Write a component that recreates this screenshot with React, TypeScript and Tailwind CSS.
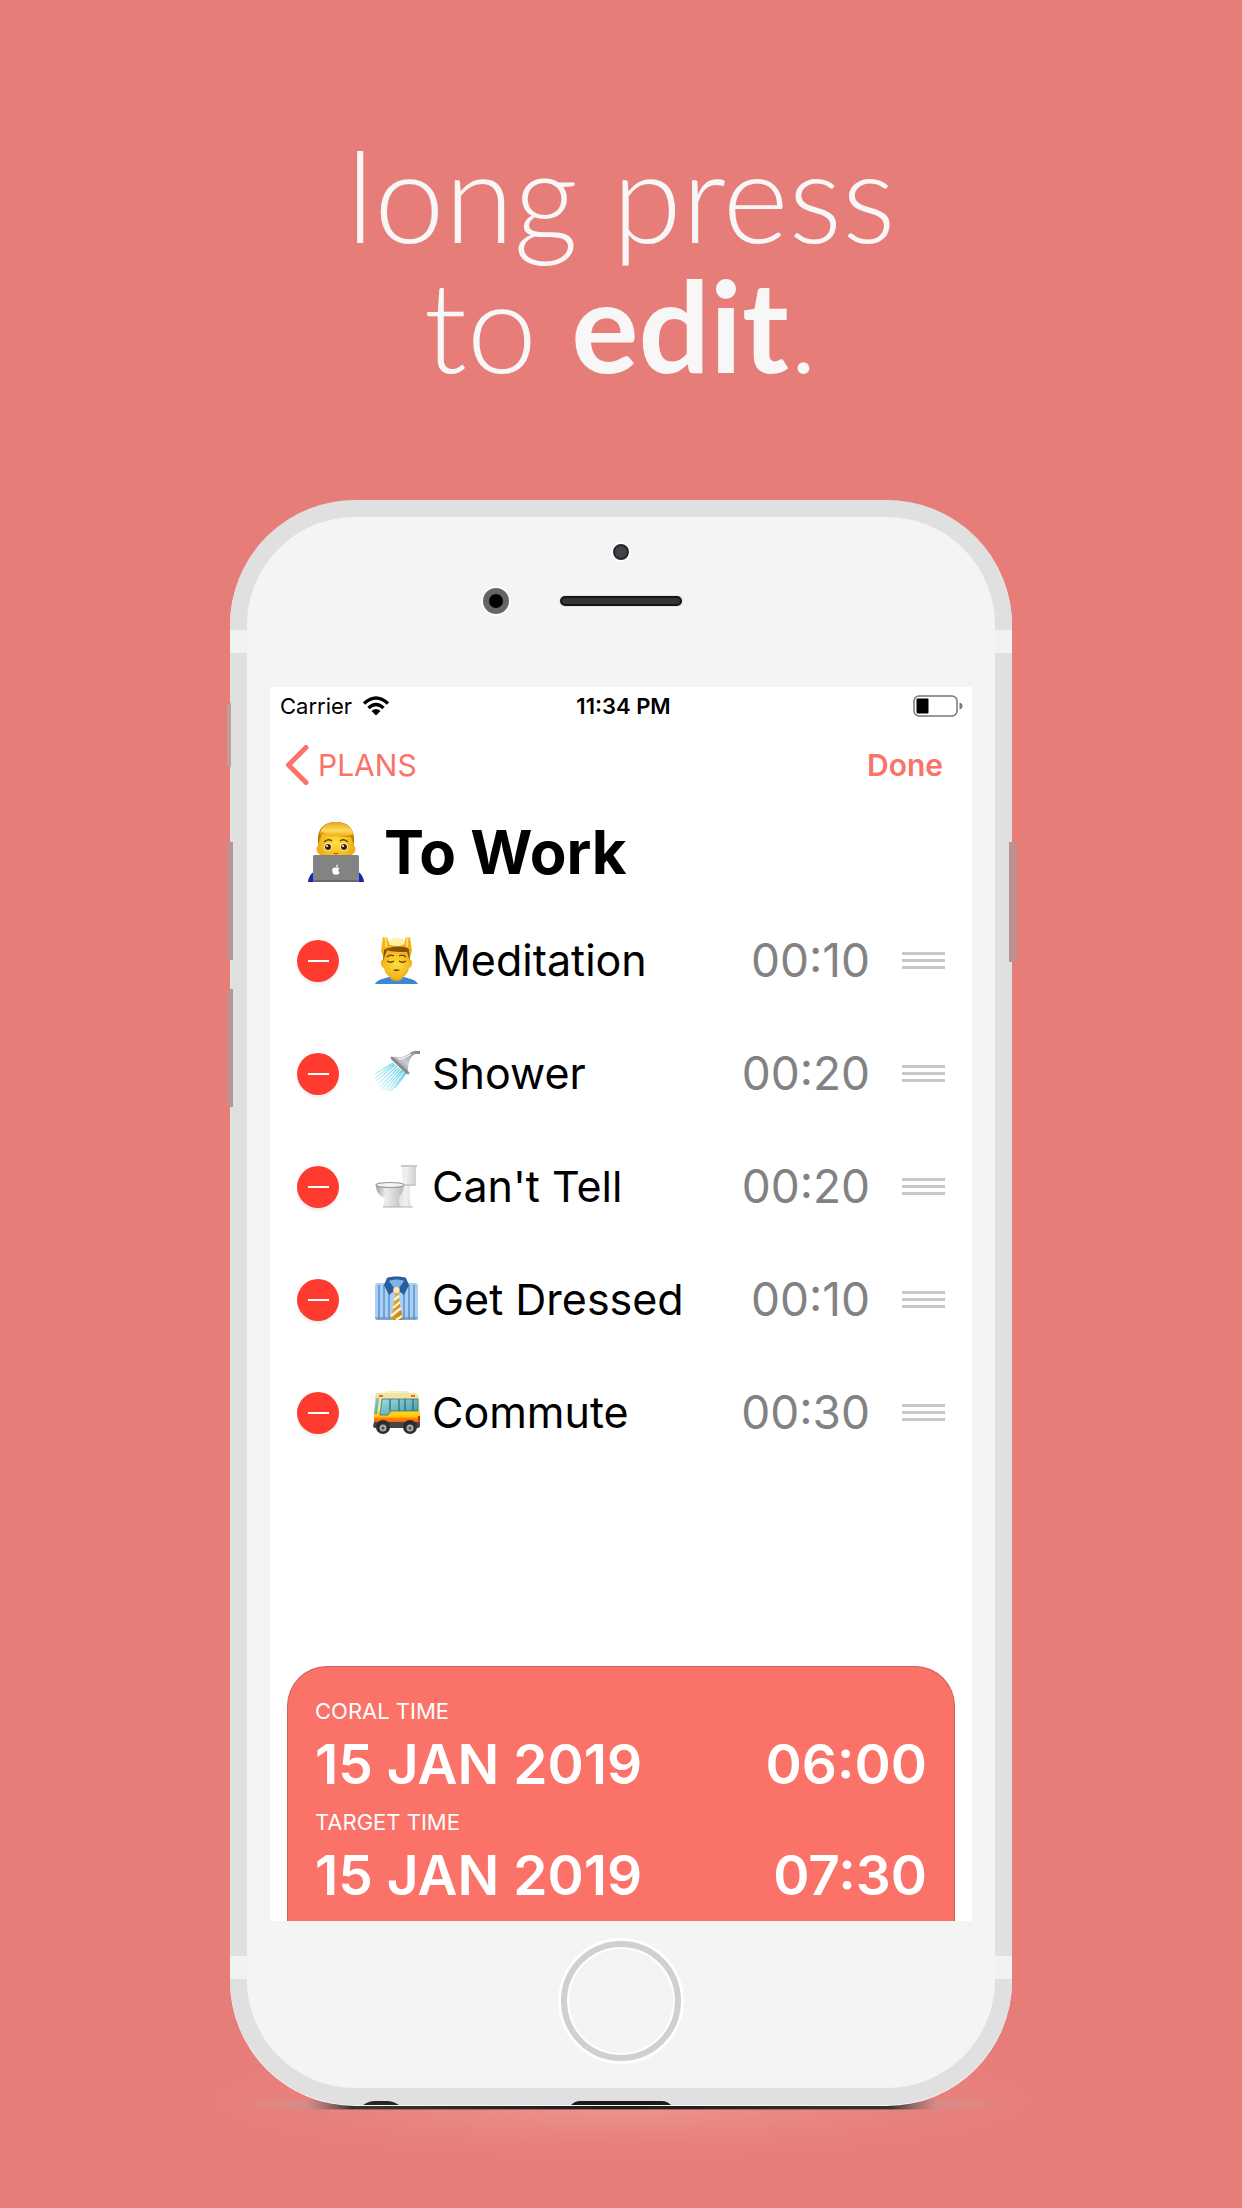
import type { ReactNode } from "react";

function Technologist() {
  return (
    <svg viewBox="0 0 56 62" className="h-[62px] w-14 shrink-0" aria-hidden="true">
      <defs>
        <radialGradient id="tFace" cx="50%" cy="60%" r="60%">
          <stop offset="0" stopColor="#ffdf3c" />
          <stop offset="1" stopColor="#eda50d" />
        </radialGradient>
        <linearGradient id="tHair" x1="0" y1="0" x2="0" y2="1">
          <stop offset="0" stopColor="#e9a417" />
          <stop offset="0.6" stopColor="#ffd95c" />
          <stop offset="1" stopColor="#f3ad12" />
        </linearGradient>
      </defs>
      <path d="M0 61c1-7 4-10 9-11h38c5 1 8 4 9 11z" fill="#1c22b8" />
      <path d="M10 20c0-12 6-19 18-19s18 7 18 19v5c2 0 2 7-1 8l-2 2H13l-2-2c-3-1-3-8-1-8z" fill="url(#tFace)" />
      <path d="M10 25V16C11 6 18 1 28 1s17 5 18 15v9l-3-9c-9-1-20 0-29-4z" fill="#c07f10" />
      <path d="M12 14C13 5 19 1 28 1s17 6 17 13c-10 2-25 2-31-3z" fill="url(#tHair)" />
      <path d="M16 21q4-4 8-1M32 20q4-3 8 1" fill="none" stroke="#6d3f08" strokeWidth="1.3" />
      <circle cx="20" cy="26" r="4" fill="#fff3b4" />
      <circle cx="36" cy="26" r="4" fill="#fff3b4" />
      <circle cx="20" cy="26" r="3" fill="#3a2408" />
      <circle cx="36" cy="26" r="3" fill="#3a2408" />
      <circle cx="19" cy="25" r="1" fill="#fff" />
      <circle cx="35" cy="25" r="1" fill="#fff" />
      <path d="M26 32q2 1.500 4 0" fill="none" stroke="#a35f08" strokeWidth="1.200" />
      <rect x="5" y="34" width="46" height="27" rx="1.500" fill="#838385" />
      <rect x="6" y="59" width="44" height="2" fill="#68686a" />
      <path d="M28 47c-4-2-5 4-2 6.500 1 .5 1.500-.3 2-.3s1 .8 2 .3c.8-.6 1.300-1.500 1.500-2.300-1.600-.8-1.500-3 0-3.700-1-1.200-2.300-1-3.500-.5zm0-.8c0-1.500 1-2.500 2-2.700 0 1.500-.8 2.500-2 2.700z" fill="#fff" />
    </svg>
  );
}

function Massage() {
  return (
    <>
      <defs>
        <radialGradient id="mFace" cx="50%" cy="50%" r="60%">
          <stop offset="0" stopColor="#ffe03a" />
          <stop offset="1" stopColor="#eda812" />
        </radialGradient>
      </defs>
      <path d="M2 47c2-4 7-5 14-7h15c7 2 12 3 14 7z" fill="#3c86d6" />
      <path d="M17 36h13v5c-2 4-11 4-13 0z" fill="#e9a415" />
      <path d="M10 0h4l3 8h13l3-8h4l2 14-3 10H12L8 14z" fill="#f4b31c" />
      <path d="M11 1h2v9M36 1h-2v9" fill="none" stroke="#ffda56" strokeWidth="2" />
      <ellipse cx="24" cy="5" rx="8" ry="4" fill="#fff0a5" />
      <path d="M10 23c-3-1-3 7 1 8 1 7 7 11 12.500 11S35 38 36 31c4-1 4-9 1-8l-1-8c-2-4-23-4-25 0z" fill="url(#mFace)" />
      <path d="M10 24l1-11c6-4 20-5 25-1l1 12-3-9c-7 0-15 0-20-2z" fill="#8b510a" />
      <path d="M14 20q3-3 7-1M26 19q4-2 7 1" fill="none" stroke="#70420b" strokeWidth="1.200" />
      <path d="M14 24q3.500 2.500 7 0M26 24q3.500 2.500 7 0" fill="none" stroke="#70420b" strokeWidth="1.300" />
      <path d="M20 33q3.500-1.500 7 0-3.500 2.500-7 0z" fill="#963c12" />
    </>
  );
}

function ShowerHead() {
  return (
    <>
      <defs>
        <linearGradient id="sHead" x1="0" y1="1" x2="1" y2="0">
          <stop offset="0" stopColor="#707376" />
          <stop offset="0.5" stopColor="#c9cbcd" />
          <stop offset="1" stopColor="#7d8083" />
        </linearGradient>
        <linearGradient id="sWater" x1="1" y1="0" x2="0" y2="1">
          <stop offset="0" stopColor="#34bfdd" />
          <stop offset="1" stopColor="#bdeef7" stopOpacity="0.4" />
        </linearGradient>
      </defs>
      <path d="M20 13L2 24M21 14L2 28M22 15L3 31M24 16L5 34M25 18L7 37M27 19L9 39M29 20L12 40M30 21L15 41M32 22L18 41M33 23L22 38" stroke="url(#sWater)" strokeWidth="1.300" fill="none" />
      <path d="M19 10c-1-2 1-4 4-3 6 1 11-1 15-5l3-1h6v3h-4c-5 1-8 7-8 17 0 3-2 3-4 1z" fill="url(#sHead)" />
      <path d="M19 8l16 15" stroke="#898c8f" strokeWidth="3" strokeLinecap="round" />
      <path d="M25 9c6 0 10-3 13-5" stroke="#f1f1f1" strokeWidth="1.300" fill="none" />
    </>
  );
}

function Toilet() {
  return (
    <>
      <defs>
        <linearGradient id="wc" x1="0" y1="0" x2="1" y2="0">
          <stop offset="0" stopColor="#a3a3a6" />
          <stop offset="0.35" stopColor="#eeeeef" />
          <stop offset="0.7" stopColor="#d2d2d4" />
          <stop offset="1" stopColor="#b9b9bc" />
        </linearGradient>
        <linearGradient id="tank" x1="0" y1="0" x2="1" y2="0">
          <stop offset="0" stopColor="#d8d8da" />
          <stop offset="0.5" stopColor="#f1f1f2" />
          <stop offset="1" stopColor="#cfcfd1" />
        </linearGradient>
      </defs>
      <path d="M29 3h14v19l-6 1c-1 8 0 14 1 21H22l8-22z" fill="url(#tank)" />
      <path d="M28 2h16v2H28z" fill="#c9c9cc" />
      <path d="M3 22c0 8 4 11 9 13-1 4-1 6-2 9h17c-1-4-2-8 0-11 2-3 4-6 4-11z" fill="url(#wc)" />
      <ellipse cx="17" cy="22" rx="14" ry="2.500" fill="#f4f4f4" stroke="#9b9b9e" strokeWidth="1.200" />
      <path d="M10 44h30M30 22h13" stroke="#b0b0b3" strokeWidth="1.200" />
    </>
  );
}

function Shirt() {
  return (
    <>
      <defs>
        <linearGradient id="tie" x1="0" y1="0" x2="1" y2="1">
          <stop offset="0" stopColor="#f4c443" />
          <stop offset="1" stopColor="#b97c0d" />
        </linearGradient>
      </defs>
      <rect x="2" y="7" width="43" height="37" rx="3" fill="#a9cff5" />
      <path d="M6 9v34M11 9v34M16 9v34M31 9v34M36 9v34M41 9v34" stroke="#6e9fdb" strokeWidth="2" />
      <path d="M2 41h43v1c0 1-1 2-3 2H5c-2 0-3-1-3-2z" fill="#6788b5" opacity="0.6" />
      <path d="M14 2C18 0 29 0 33 2l3 7-5 10-7.500-6L16 19 11 9z" fill="#285e9b" />
      <path d="M16 5c4-2 11-2 15 0l-5 7h-5z" fill="#7cb4ea" />
      <path d="M20 13q3.500-4 7 0l-2 6 5 25H18l4-25z" fill="url(#tie)" />
      <path d="M21 24l5-4M20 32l7-6M18 40l10-8M23 44l6-4" stroke="#fff3d2" strokeWidth="2.300" />
      <circle cx="23.500" cy="14" r="3" fill="#ffe8ad" />
    </>
  );
}

function Bus() {
  return (
    <>
      <defs>
        <linearGradient id="busSide" x1="0" y1="0" x2="0" y2="1">
          <stop offset="0" stopColor="#ffdc18" />
          <stop offset="0.4" stopColor="#ffc20a" />
          <stop offset="0.5" stopColor="#ff7c0d" />
          <stop offset="1" stopColor="#df4c0c" />
        </linearGradient>
        <linearGradient id="busGlass" x1="0" y1="0" x2="1" y2="1">
          <stop offset="0" stopColor="#9bdde3" />
          <stop offset="1" stopColor="#3c99a5" />
        </linearGradient>
      </defs>
      <path d="M12 4q0-2 2-2h19q3 0 3 2z" fill="#f8eec1" />
      <path d="M4 4h37q4 0 5 5l1 15H1L2 8q0-4 2-4z" fill="#f2e3a1" />
      <path d="M1 22h46v15H1z" fill="url(#busSide)" />
      <path d="M1 33h46v4q0 2-2 2H2q-2 0-2-2z" fill="#474445" />
      <path d="M3 9h3L4 25H1z" fill="url(#busGlass)" />
      <path d="M9 10h36v12H18l-3 4H7z" fill="url(#busGlass)" stroke="#347783" strokeWidth="0.800" />
      <path d="M17 10v12M26 10v12M32 10v12M40 10v12" stroke="#416c70" strokeWidth="1.300" />
      <path d="M6 6h4v2H6zM38 6h4v2h-4z" fill="#e8730b" />
      <circle cx="10" cy="38" r="7" fill="#2c2c2e" />
      <circle cx="37" cy="38" r="7" fill="#2c2c2e" />
      <circle cx="10" cy="39" r="3.500" fill="#a8abae" />
      <circle cx="37" cy="39" r="3.500" fill="#a8abae" />
      <circle cx="10" cy="39" r="1.500" fill="#4b4b4d" />
      <circle cx="37" cy="39" r="1.500" fill="#4b4b4d" />
      <path d="M45 27h2v5h-2z" fill="#d12b16" />
    </>
  );
}

const steps: { name: string; time: string; icon: ReactNode }[] = [
  { name: "Meditation", time: "00:10", icon: <Massage /> },
  { name: "Shower", time: "00:20", icon: <ShowerHead /> },
  { name: "Can't Tell", time: "00:20", icon: <Toilet /> },
  { name: "Get Dressed", time: "00:10", icon: <Shirt /> },
  { name: "Commute", time: "00:30", icon: <Bus /> },
];

const schedule = [
  { label: "CORAL TIME", date: "15 JAN 2019", time: "06:00" },
  { label: "TARGET TIME", date: "15 JAN 2019", time: "07:30" },
];

function StatusBar() {
  return (
    <div className="grid h-[38px] grid-cols-[1fr_auto_1fr] items-center pr-[9px] pl-2.5 text-[22px] text-black">
      <div className="flex items-center gap-2.5">
        <span>Carrier</span>
        <svg viewBox="0 0 28 20" className="h-5 w-7" aria-label="Wi-Fi">
          <path d="M2 7.500Q14-3.500 26 7.500M6.500 12Q14 5 21.500 12" fill="none" stroke="#000" strokeWidth="3.400" />
          <path d="M9.500 15Q14 11 18.500 15L14 19.500z" fill="#000" />
        </svg>
      </div>
      <span className="pl-1 font-semibold">11:34 PM</span>
      <svg viewBox="0 0 50 22" className="h-[22px] w-[50px] justify-self-end" aria-label="Battery">
        <rect x="1" y="1" width="43" height="20" rx="5" fill="none" stroke="#777" strokeWidth="1.500" />
        <rect x="3.500" y="3.500" width="12" height="15" rx="1" fill="#000" />
        <path d="M46.500 7.500q3 1 3 3.500t-3 3.500z" fill="#777" />
      </svg>
    </div>
  );
}

function Screen() {
  return (
    <main className="flex min-h-[1234px] flex-col bg-white font-[Inter,sans-serif]">
      <StatusBar />
      <nav className="flex h-20 items-center justify-between pr-[29px] pl-4 text-[30px] text-[#fb7268]">
        <button className="flex items-center gap-2">
          <svg viewBox="0 0 24 40" className="h-10 w-6" aria-hidden="true">
            <path d="M20 2.500L2.500 20 20 37.500" fill="none" stroke="currentColor" strokeWidth="5" strokeLinecap="round" strokeLinejoin="round" />
          </svg>
          PLANS
        </button>
        <button className="font-semibold">Done</button>
      </nav>
      <h2 className="flex h-[99px] items-center gap-5 pb-1.5 pl-[38px] text-[60px] font-bold text-black">
        <Technologist />
        To Work
      </h2>
      <ul>
        {steps.map((s) => (
          <li key={s.name} className="flex h-[113px] items-center pr-[27px] pl-[27px]">
            <button
              aria-label={`Delete ${s.name}`}
              className="flex size-[42px] shrink-0 items-center justify-center rounded-full bg-[#ff3b30] shadow-[0_3px_2px_#f0f1f2]"
            >
              <span className="h-[2px] w-[21px] bg-white" />
            </button>
            <svg viewBox="0 0 47 47" className="ml-[34px] size-[47px] shrink-0" aria-hidden="true">
              {s.icon}
            </svg>
            <span className="ml-3 grow text-[43px] text-black">{s.name}</span>
            <span className="text-[46px] text-[#828284]">{s.time}</span>
            <button aria-label={`Move ${s.name}`} className="ml-8 flex w-[43px] flex-col gap-1">
              <span className="h-[3px] bg-[#c7c7cc]" />
              <span className="h-[3px] bg-[#c7c7cc]" />
              <span className="h-[3px] bg-[#c7c7cc]" />
            </button>
          </li>
        ))}
      </ul>
      <section className="mx-[17px] mt-auto flex h-[255px] flex-col rounded-t-[40px] border border-b-0 border-[#c9615a] bg-[#fb7268] px-[27px] pt-7 text-white">
        {schedule.map((s) => (
          <div key={s.label} className="h-[111px]">
            <p className="text-[22px] leading-8">{s.label}</p>
            <div className="flex items-center justify-between text-[55px] leading-[74px] font-semibold">
              <span>{s.date}</span>
              <span>{s.time}</span>
            </div>
          </div>
        ))}
      </section>
    </main>
  );
}

export default function App() {
  return (
    <div className="min-h-screen overflow-hidden bg-[#e77d78] px-4">
      <h1 className="pt-[130px] text-center font-[Lato,sans-serif] text-[126px] leading-[130px] font-light text-[#f7f7f7]">
        long press
        <br />
        to <b className="font-bold">edit</b>.
      </h1>
      <div className="relative mx-auto mt-[110px] max-w-[782px]">
        {/* Ground shadow */}
        <svg viewBox="0 0 1000 200" preserveAspectRatio="none" className="absolute -bottom-[70px] -left-[14%] h-[200px] w-[128%]" aria-hidden="true">
          <defs>
            <radialGradient id="glow">
              <stop offset="0" stopColor="#ed9a94" />
              <stop offset="1" stopColor="#e77d78" stopOpacity="0" />
            </radialGradient>
            <linearGradient id="ground" x1="0" y1="0" x2="1" y2="0">
              <stop offset="0" stopColor="#d8a09b" stopOpacity="0" />
              <stop offset="0.09" stopColor="#c49490" stopOpacity="0.5" />
              <stop offset="0.15" stopColor="#3a3232" />
              <stop offset="0.5" stopColor="#1f1b1b" />
              <stop offset="0.85" stopColor="#3a3232" />
              <stop offset="0.91" stopColor="#c49490" stopOpacity="0.5" />
              <stop offset="1" stopColor="#d8a09b" stopOpacity="0" />
            </linearGradient>
          </defs>
          <ellipse cx="500" cy="125" rx="500" ry="72" fill="url(#glow)" />
          <rect x="115" y="125" width="770" height="9" fill="url(#ground)" />
          <rect x="115" y="134" width="770" height="1" fill="url(#ground)" opacity="0.4" />
        </svg>

        <div className="relative rounded-[125px] border-[17px] border-[#e0e0e0] bg-[#f4f4f4] px-[23px] shadow-[0_1px_0_#f7f7f7]">
          {/* Antenna bands */}
          <div className="absolute top-[113px] -left-[17px] h-[23px] w-[17px] bg-[#f2f2f2]" />
          <div className="absolute top-[113px] -right-[17px] h-[23px] w-[17px] bg-[#f2f2f2]" />
          <div className="absolute bottom-[109px] -left-[17px] h-[23px] w-[17px] bg-[#f2f2f2]" />
          <div className="absolute -right-[17px] bottom-[109px] h-[23px] w-[17px] bg-[#f2f2f2]" />

          <header className="flex h-[170px] flex-col items-center pt-[27px]">
            <span className="size-4 rounded-full border-2 border-[#26272b] bg-[#414246] ring-2 ring-white" />
            <div className="mt-7 grid w-full grid-cols-[1fr_auto_1fr] items-center">
              <span className="mr-[51px] size-[26px] justify-self-end rounded-full border-[6px] border-[#656565] bg-black ring-2 ring-white" />
              <span className="h-2.5 w-[122px] rounded-full border-2 border-[#141414] bg-[#333] ring-1 ring-[#e3e3e3]" />
            </div>
          </header>
          <Screen />
          <footer className="flex h-[167px] items-center justify-center pb-2">
            <button
              aria-label="Home"
              className="size-[120px] rounded-full border-[6px] border-[#cfd1d1] shadow-[0_0_0_3px_#fff,inset_0_0_0_2px_#fff]"
            />
          </footer>

          {/* Bottom ports */}
          <svg viewBox="0 0 36 4" className="absolute -bottom-[17px] left-[116px] h-1 w-9" aria-hidden="true">
            <path d="M0 4Q6 0 12 0h12q6 0 12 4z" fill="#2a2323" />
          </svg>
          <svg viewBox="0 0 100 4" className="absolute -bottom-[17px] left-1/2 h-1 w-[100px] -translate-x-1/2" aria-hidden="true">
            <path d="M0 4Q4 0 9 0h82q5 0 9 4z" fill="#1f1b1b" />
          </svg>
        </div>

        {/* Side buttons */}
        <div className="absolute top-[203px] -left-[3px] h-16 w-1 rounded-l-sm bg-[#c09c9a]" />
        <div className="absolute top-[342px] -left-[3px] h-[118px] w-1.5 rounded-l-sm bg-[#ba9290]" />
        <div className="absolute top-[489px] -left-[3px] h-[118px] w-1.5 rounded-l-sm bg-[#ba9290]" />
        <div className="absolute top-[342px] -right-[5px] h-[120px] w-2 rounded-r-sm bg-[#ba9290]" />
      </div>
    </div>
  );
}
